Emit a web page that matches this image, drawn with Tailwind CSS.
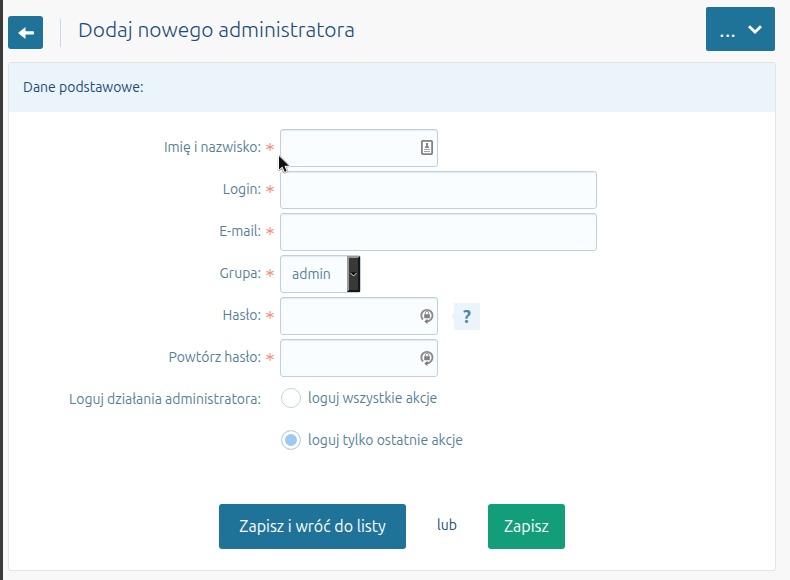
<!DOCTYPE html>
<html lang="pl">
<head>
<meta charset="utf-8">
<meta name="viewport" content="width=device-width, initial-scale=1">
<title>Dodaj nowego administratora</title>
<script src="https://cdn.jsdelivr.net/npm/@tailwindcss/browser@4"></script>
</head>
<body class="min-h-screen border-l-[3px] border-[#3c3b3c] bg-[#f8f8f8] pl-[5px] pr-[14px] pb-[9px] font-['Ubuntu','Noto_Sans',sans-serif] text-[14px] leading-5 text-[#557f99]">
  <header class="flex h-[62px] items-start pt-[7px] pr-px">
    <a href="#" aria-label="Wróć" class="mt-[9px] flex h-[33px] w-[35px] items-center justify-center rounded-[3px] bg-[#1f7399]">
      <svg class="h-3 w-4" viewBox="0 0 16 12" fill="#fff"><path d="M0 6 7.500 0V4.300H15.200Q16 4.300 16 5.100V6.700Q16 7.500 15.200 7.500H7.500V12Z"/></svg>
    </a>
    <span class="mt-3 ml-[17px] h-7 w-px bg-[#c5dae8]"></span>
    <h1 class="mt-2 ml-[17px] grow font-['Ubuntu','Open_Sans',sans-serif] text-[21px] leading-7 font-light text-[#1b4b76]">Dodaj nowego administratora</h1>
    <button type="button" aria-label="Więcej" class="flex h-11 w-[69px] items-center justify-center gap-3 rounded-[2px] bg-[#1f7399] text-2xl leading-7 font-light text-white">
      <span>...</span>
      <svg class="h-[9px] w-[14px]" viewBox="0 0 14 9" fill="none" stroke="#fff" stroke-width="2.800"><path d="M1 1.200 7 7 13 1.200"/></svg>
    </button>
  </header>

  <main class="rounded-[3px] border border-[#e3e3e3] bg-white">
    <h2 class="flex h-[49px] items-center bg-[#ecf4fb] px-[14px] pb-0.5 text-[#1b4b76]">Dane podstawowe:</h2>
    <form class="pt-[17px] pb-[21px]">
      <div class="grid grid-cols-[265px_1fr] gap-x-[6px] gap-y-1">
        <label for="name" class="flex h-9 items-center justify-end gap-[5px]">Imię i nazwisko: <span class="flex w-2 justify-center text-[#f58f7b]"><svg class="h-2 w-2" viewBox="0 0 8 8" stroke="currentColor" stroke-width="1.100"><path d="M4 0V8M.3 2.300 7.700 5.700M7.700 2.300 .3 5.700"/></svg></span></label>
        <div class="relative w-[158px]">
          <input id="name" type="text" class="block h-[38px] w-full rounded-[3px] border border-[#c0d0df] bg-[#f9fdff] pr-7 pl-3 shadow-[inset_0_1px_1px_#e3eaf0]">
          <svg class="absolute top-[11px] right-[5px] h-[15px] w-3" viewBox="0 0 12 15" fill="none"><rect x=".9" y=".9" width="10.200" height="13.200" rx=".8" fill="#fff" stroke="#828282" stroke-width="1.800"/><path d="M5 3H7V5.500L8.300 8H3.700L5 5.500Z" fill="#858585"/><path d="M3 9.500H9M3 11.500H9" stroke="#a5a5a5"/></svg>
          <svg class="absolute top-[25px] -left-[3px] h-[22px] w-4" viewBox="0 0 16 22"><path d="M2 2V16L5.300 13 7.600 18.300 10.100 17.200 7.800 12H12Z" fill="none" stroke="#999" stroke-width="2.400" stroke-linejoin="round"/><path d="M1.500 1V16.500L5.200 13.200 7.500 18.500 10.300 17.300 8 12.300H13Z" fill="#111" stroke="#fff" stroke-width="1"/></svg>
        </div>

        <label for="login" class="flex h-9 items-center justify-end gap-[5px]">Login: <span class="flex w-2 justify-center text-[#f58f7b]"><svg class="h-2 w-2" viewBox="0 0 8 8" stroke="currentColor" stroke-width="1.100"><path d="M4 0V8M.3 2.300 7.700 5.700M7.700 2.300 .3 5.700"/></svg></span></label>
        <input id="login" type="text" class="block h-[38px] w-full max-w-[317px] rounded-[3px] border border-[#c0d0df] bg-[#f9fdff] px-3 shadow-[inset_0_1px_1px_#e3eaf0]">

        <label for="email" class="flex h-9 items-center justify-end gap-[5px]">E-mail: <span class="flex w-2 justify-center text-[#f58f7b]"><svg class="h-2 w-2" viewBox="0 0 8 8" stroke="currentColor" stroke-width="1.100"><path d="M4 0V8M.3 2.300 7.700 5.700M7.700 2.300 .3 5.700"/></svg></span></label>
        <input id="email" type="email" class="block h-[38px] w-full max-w-[317px] rounded-[3px] border border-[#c0d0df] bg-[#f9fdff] px-3 shadow-[inset_0_1px_1px_#e3eaf0]">

        <label for="group" class="flex h-9 items-center justify-end gap-[5px]">Grupa: <span class="flex w-2 justify-center text-[#f58f7b]"><svg class="h-2 w-2" viewBox="0 0 8 8" stroke="currentColor" stroke-width="1.100"><path d="M4 0V8M.3 2.300 7.700 5.700M7.700 2.300 .3 5.700"/></svg></span></label>
        <div class="relative w-[81px]">
          <select id="group" class="block h-[38px] w-full appearance-none rounded-[3px] border border-[#c0d0df] bg-[#f9fdff] pr-4 pl-[11px] shadow-[inset_0_1px_1px_#e3eaf0]"><option>admin</option></select>
          <span class="pointer-events-none absolute top-px right-px flex h-9 w-[13px] items-center justify-center border-2 border-t-[#9a9a9a] border-r-[#161616] border-b-[#161616] border-l-[#9a9a9a] bg-[#393939]">
            <svg class="h-[5px] w-[7px] shrink-0" viewBox="0 0 7 5"><path d="M0 .5H7L3.500 4Z" fill="#000"/><path d="M.3 .8 3.500 4 6.700 .8" fill="none" stroke="#e0e0e0"/></svg>
          </span>
        </div>

        <label for="password" class="flex h-9 items-center justify-end gap-[5px]">Hasło: <span class="flex w-2 justify-center text-[#f58f7b]"><svg class="h-2 w-2" viewBox="0 0 8 8" stroke="currentColor" stroke-width="1.100"><path d="M4 0V8M.3 2.300 7.700 5.700M7.700 2.300 .3 5.700"/></svg></span></label>
        <div class="flex items-center">
          <div class="relative w-[158px]">
            <input id="password" type="password" class="block h-[38px] w-full rounded-[3px] border border-[#c0d0df] bg-[#f9fdff] pr-7 pl-3 shadow-[inset_0_1px_1px_#e3eaf0]">
            <svg class="absolute top-[11px] right-1 h-4 w-[14px]" viewBox="0 0 14 16" fill="none"><path d="M3 11.500A5.600 5.600 0 1 1 10.800 11.500Q9.500 13.300 6.500 13.300" stroke="#8c8c8c" stroke-width="1.900"/><path d="M7.500 10.800V16L4.300 13.400Z" fill="#777"/><rect x="4.200" y="6.200" width="5.600" height="4" fill="#808080"/><path d="M5.300 6.500V5A1.700 1.700 0 0 1 8.700 5V6.500" stroke="#8c8c8c" stroke-width=".9"/></svg>
          </div>
          <svg class="ml-[13px] h-[7px] w-[3px]" viewBox="0 0 3 7" fill="#ecf4fb"><path d="M3 0V7L0 3.500Z"/></svg>
          <button type="button" aria-label="Pomoc" class="h-[27px] w-[26px] bg-[#ecf4fb] text-lg leading-5 font-bold text-[#4f86a8]">?</button>
        </div>

        <label for="repeat" class="flex h-9 items-center justify-end gap-[5px]">Powtórz hasło: <span class="flex w-2 justify-center text-[#f58f7b]"><svg class="h-2 w-2" viewBox="0 0 8 8" stroke="currentColor" stroke-width="1.100"><path d="M4 0V8M.3 2.300 7.700 5.700M7.700 2.300 .3 5.700"/></svg></span></label>
        <div class="relative w-[158px]">
          <input id="repeat" type="password" class="block h-[38px] w-full rounded-[3px] border border-[#c0d0df] bg-[#f9fdff] pr-7 pl-3 shadow-[inset_0_1px_1px_#e3eaf0]">
          <svg class="absolute top-[11px] right-1 h-4 w-[14px]" viewBox="0 0 14 16" fill="none"><path d="M3 11.500A5.600 5.600 0 1 1 10.800 11.500Q9.500 13.300 6.500 13.300" stroke="#8c8c8c" stroke-width="1.900"/><path d="M7.500 10.800V16L4.300 13.400Z" fill="#777"/><rect x="4.200" y="6.200" width="5.600" height="4" fill="#808080"/><path d="M5.300 6.500V5A1.700 1.700 0 0 1 8.700 5V6.500" stroke="#8c8c8c" stroke-width=".9"/></svg>
        </div>

        <span id="log" class="flex h-9 items-center justify-end pr-[13px]">Loguj działania administratora:</span>
        <div role="radiogroup" aria-labelledby="log" class="flex flex-col gap-2 pl-px">
          <label class="flex h-[34px] items-center gap-[7px]"><input type="radio" name="log" class="h-5 w-5 appearance-none rounded-full border border-[#c0d3e2] bg-white checked:bg-[#9bcbf3] checked:shadow-[inset_0_0_0_3px_#fff]">loguj wszystkie akcje</label>
          <label class="flex h-[34px] items-center gap-[7px]"><input type="radio" name="log" checked class="h-5 w-5 appearance-none rounded-full border border-[#c0d3e2] bg-white checked:bg-[#9bcbf3] checked:shadow-[inset_0_0_0_3px_#fff]">loguj tylko ostatnie akcje</label>
        </div>
      </div>

      <div class="mt-[47px] flex items-center justify-center gap-[31px]">
        <button type="submit" class="h-[45px] w-[187px] rounded-[3px] bg-[#1f7399] pb-0.5 text-base text-white">Zapisz i wróć do listy</button>
        <span class="pb-1 text-[#1b4b76]">lub</span>
        <button type="submit" class="h-[45px] w-[77px] rounded-[3px] bg-[#129e78] pb-0.5 text-base text-white">Zapisz</button>
      </div>
    </form>
  </main>
</body>
</html>
